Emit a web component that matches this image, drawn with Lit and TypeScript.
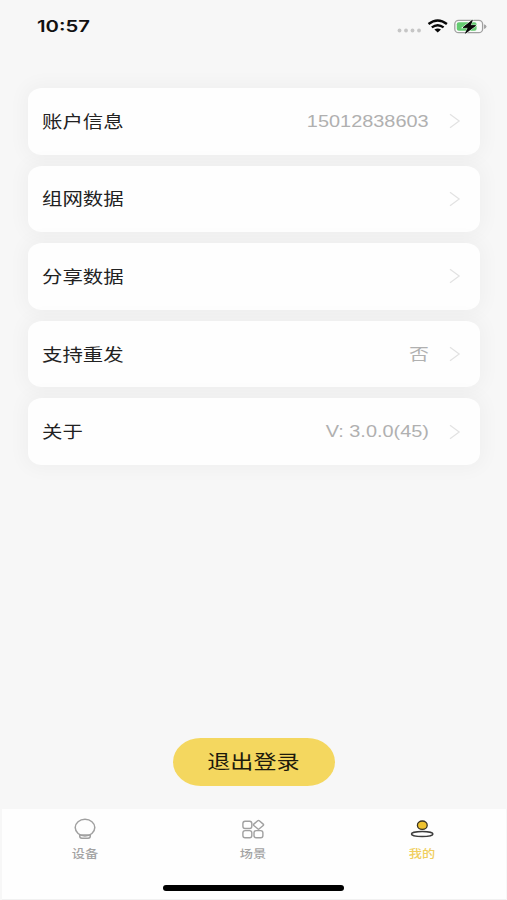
import { LitElement, html, css, svg } from "lit";
import { customElement } from "lit/decorators.js";

interface Row {
  label: string;
  value?: string;
}

const rows: Row[] = [
  { label: "账户信息", value: "15012838603" },
  { label: "组网数据" },
  { label: "分享数据" },
  { label: "支持重发", value: "否" },
  { label: "关于", value: "V: 3.0.0(45)" },
];

const bulb = svg`<g fill="none" stroke="#a0a0a0" stroke-width="1.5">
  <ellipse cx="13" cy="9.6" rx="9.8" ry="8.3"/>
  <path d="M7.7 16.2V18q0 2.2 2.2 2.2h6.2q2.2 0 2.2-2.2v-1.8M8.5 17h9"/></g>`;
const grid = svg`<g fill="none" stroke="#a0a0a0" stroke-width="1.4">
  <rect x="2.9" y="3.3" width="8.9" height="7.2" rx="2.2"/>
  <rect x="2.9" y="12.6" width="8.9" height="7.2" rx="2.2"/>
  <rect x="14" y="12.6" width="8.9" height="7.2" rx="2.2"/>
  <path d="M17.7 2.8q.8-.7 1.6 0l3.9 3.3q.8.7 0 1.4l-3.9 3.3q-.8.7-1.6 0l-3.9-3.3q-.8-.7 0-1.4z"/></g>`;
const person = svg`<ellipse cx="13.3" cy="7.2" rx="4.9" ry="4.2" fill="#efc22e" stroke="#3a3220" stroke-width="1.3"/>
  <ellipse cx="13.2" cy="16.1" rx="10.7" ry="2.5" fill="#fff" stroke="#3c3c3c" stroke-width="1.5"/>`;

const tabs = [
  { label: "设备", icon: bulb, on: false },
  { label: "场景", icon: grid, on: false },
  { label: "我的", icon: person, on: true },
];

@customElement("app-root")
export class AppRoot extends LitElement {
  static styles = css`
    :host {
      display: flex;
      flex-direction: column;
      height: 900px;
      overflow: hidden;
      box-sizing: border-box;
      background: #f7f7f7;
      color: #222;
      font-family: Inter, "Noto Sans CJK SC", sans-serif;
    }
    svg {
      display: block;
    }
    .status {
      display: flex;
      justify-content: space-between;
      height: 88px;
      box-sizing: border-box;
      padding: 16px 18px 0 37.2px;
    }
    .time {
      font-size: 16px;
      font-weight: 600;
      line-height: 21px;
      color: #111;
      transform: scaleX(1.27);
      transform-origin: left;
    }
    .list {
      display: flex;
      flex-direction: column;
      gap: 11.1px;
      padding: 0 27px 0 28px;
    }
    .card {
      display: flex;
      align-items: center;
      height: 66.5px;
      box-sizing: border-box;
      padding: 0 19px 0 13.6px;
      border-radius: 14px / 12px;
      background: #fefefe;
      position: relative;
      box-shadow: 0 0 18px 5px rgba(0, 0, 0, 0.033);
    }
    .label {
      font-size: 17px;
      line-height: 24px;
      flex: 1;
      padding-top: 1px;
    }
    .label span,
    .value {
      display: inline-block;
      transform: scaleX(1.2);
      transform-origin: left;
    }
    .value {
      font-family: "Liberation Sans", "Noto Sans CJK SC", sans-serif;
      font-size: 15.8px;
      line-height: 24px;
      padding-top: 1px;
      color: #b0b0b0;
      margin-right: 19px;
      transform: scaleX(1.26);
      transform-origin: right;
    }
    .action {
      flex: 1;
      display: flex;
      flex-direction: column;
      align-items: center;
      justify-content: flex-end;
      padding: 0 0 23px 1px;
    }
    .logout {
      width: 162px;
      height: 48.5px;
      padding: 1px 0 0;
      border: 0;
      border-radius: 28px / 24.25px;
      background: #f4d75f;
      color: #1d1a0c;
      font: 19.2px/28px Inter, "Noto Sans CJK SC", sans-serif;
    }
    .logout span {
      display: block;
      transform: translateX(-0.6px) scaleX(1.2);
    }
    .bar {
      height: 91px;
      margin: 0 1px 0 1.5px;
      box-sizing: border-box;
      background: #fefefe;
      border-bottom: 1px solid #f1f1f1;
      display: flex;
      flex-direction: column;
      align-items: center;
    }
    .tabs {
      display: flex;
      width: 506px;
      height: 76px;
      margin-left: -1px;
    }
    .tab {
      flex: 1;
      display: flex;
      flex-direction: column;
      align-items: center;
      padding-top: 9px;
      color: #a3a3a3;
      font-size: 11px;
      line-height: 16px;
      font-weight: 500;
    }
    .tab span {
      margin-top: 6px;
      transform: scaleX(1.2);
    }
    .tab.on {
      color: #f0ce5c;
    }
    .home {
      width: 181px;
      height: 5.5px;
      border-radius: 3px;
      background: #000;
    }
  `;

  render() {
    return html`
      <div class="status">
        <div class="time">10:57</div>
        <svg width="92" height="22" viewBox="0 0 92 22">
          <g fill="#c6c6c6">
            <circle cx="2.5" cy="14.5" r="1.9" /><circle cx="9" cy="14.5" r="1.9" />
            <circle cx="15.5" cy="14.5" r="1.9" /><circle cx="22" cy="14.5" r="1.9" />
          </g>
          <g fill="none" stroke="#080808" stroke-width="2.4">
            <path d="M31.5 8Q40.7 0.9 49.9 8" />
            <path d="M34.8 11.4Q40.7 6.9 46.6 11.4" />
          </g>
          <path d="M37.4 13.6Q40.7 11.2 44 13.6L40.7 16.4z" fill="#080808" />
          <rect x="57.8" y="4.3" width="27.8" height="12.4" rx="3.8" fill="#fafafa" stroke="#a0a0a0" stroke-width="1.3" />
          <rect x="59.8" y="6.2" width="19.8" height="8.6" rx="2" fill="#64cb71" />
          <path d="M87 8.3q2.5.7 2.5 2.3T87 12.9z" fill="#a6a6a6" />
          <path d="M75.4 4.2L66 11.6H71.2L68.4 17.3L78.7 9.6H73.3z" fill="#080808" stroke="#f4fbf4" stroke-width="1.5" paint-order="stroke" />
          <path d="M75.4 4.2L66 11.6H71.2L68.4 17.3L78.7 9.6H73.3z" fill="#080808" stroke="#080808" stroke-width="0.7" />
        </svg>
      </div>
      <div class="list">
        ${rows.map(
          (r) => html`<div class="card">
            <div class="label"><span>${r.label}</span></div>
            ${r.value ? html`<div class="value">${r.value}</div>` : ""}
            <svg width="13" height="16" viewBox="0 0 13 16">
              <path d="M2 1.3L11.2 8L2 14.7" fill="none" stroke="#e2e2e2" stroke-width="1.2" />
            </svg>
          </div>`
        )}
      </div>
      <div class="action"><button class="logout"><span>退出登录</span></button></div>
      <div class="bar">
        <div class="tabs">
          ${tabs.map(
            (t) => html`<div class="tab ${t.on ? "on" : ""}">
              <svg width="26" height="22" viewBox="0 0 26 22">${t.icon}</svg>
              <span>${t.label}</span>
            </div>`
          )}
        </div>
        <div class="home"></div>
      </div>
    `;
  }
}
